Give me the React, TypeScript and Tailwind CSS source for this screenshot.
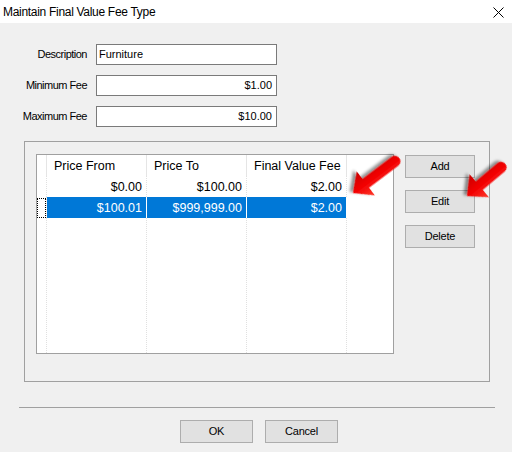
import React from "react";

const font = "font-['Liberation_Sans',Arial,sans-serif]";

const columns = [
  { key: "from", label: "Price From" },
  { key: "to", label: "Price To" },
  { key: "fee", label: "Final Value Fee" },
] as const;

type Row = { from: string; to: string; fee: string; selected?: boolean };

const rows: Row[] = [
  { from: "$0.00", to: "$100.00", fee: "$2.00" },
  { from: "$100.01", to: "$999,999.00", fee: "$2.00", selected: true },
];

function Field({ label, value, right }: { label: string; value: string; right?: boolean }) {
  return (
    <div className="flex items-center">
      <div className="w-[88px] pr-[1px] text-right text-[11px] tracking-[-0.5px] text-black">{label}</div>
      <div
        className={`ml-[8px] flex h-[21px] w-[181px] items-center border border-[#7a7a7a] bg-white text-[11px] text-black ${
          right ? "justify-end pr-[4px]" : "pl-[2px]"
        }`}
      >
        {value}
      </div>
    </div>
  );
}

function WinButton({ children, className = "" }: { children: React.ReactNode; className?: string }) {
  return (
    <button
      className={`flex h-[23px] items-center justify-center border border-[#adadad] bg-[#e1e1e1] text-[11px] tracking-[-0.2px] text-black ${className}`}
    >
      {children}
    </button>
  );
}

function FeeGrid() {
  return (
    <div className="flex h-[200px] w-[358px] overflow-hidden border border-[#a0a0a0] bg-white text-[12.5px] text-black">
      {/* row header strip */}
      <div className="flex w-[10px] flex-col">
        <div className="h-[21px] border-r border-[#e5e5e5]" />
        {rows.map((r, i) => (
          <div key={i} className="flex h-[21px] items-center border-r border-dotted border-[#e0e0e0] py-[1px]">
            {r.selected && <div className="h-[20px] w-[9px] border border-dotted border-black" />}
          </div>
        ))}
        <div className="flex-1 border-r border-dotted border-[#e0e0e0]" />
      </div>

      {columns.map((c) => (
        <div key={c.key} className="flex w-[100px] flex-col">
          <div className="flex h-[21px] items-center border-r border-[#e5e5e5] pl-[7px] pt-[2px]">{c.label}</div>
          {rows.map((r, i) => (
            <div
              key={i}
              className={`flex h-[21px] items-center justify-end pr-[4px] pt-[2px] ${
                r.selected
                  ? "border-r border-white bg-[#0078d7] text-white"
                  : "border-r border-dotted border-[#e0e0e0]"
              }`}
            >
              {r[c.key]}
            </div>
          ))}
          <div className="flex-1 border-r border-dotted border-[#e0e0e0]" />
        </div>
      ))}

      <div className="flex-1" />
    </div>
  );
}

// red callout arrow, tip at (x, y), pointing along `angle` degrees
function Arrow({ x, y, angle, length }: { x: number; y: number; angle: number; length: number }) {
  const t = length - 5.5;
  const d = `M0,0 L-16,-15 L-16,-5.5 L-${t},-5.5 A5.5,5.5 0 0 0 -${t},5.5 L-16,5.5 L-16,15 Z`;
  return (
    <g transform={`translate(${x} ${y}) rotate(${angle})`}>
      <path d={d} fill="url(#arrowRed)" filter="url(#arrowShadow)" />
    </g>
  );
}

export default function App() {
  return (
    <div className={`relative flex h-[452px] w-[512px] flex-col overflow-hidden bg-[#f0f0f0] ${font}`}>
      {/* title bar */}
      <div className="flex h-[23px] items-center justify-between bg-white pl-[3px] pr-[8px]">
        <span className="text-[12px] tracking-[-0.3px] text-black">Maintain Final Value Fee Type</span>
        <svg width="11" height="11" viewBox="0 0 11 11" className="mt-[1px]">
          <path d="M0.5,0.5 L10.5,10.5 M10.5,0.5 L0.5,10.5" stroke="#000" strokeWidth="1" />
        </svg>
      </div>

      <div className="mt-[21px] flex flex-col gap-[10px]">
        <Field label="Description" value="Furniture" />
        <Field label="Minimum Fee" value="$1.00" right />
        <Field label="Maximum Fee" value="$10.00" right />
      </div>

      {/* fee bands group */}
      <div className="ml-[24px] mt-[14px] flex h-[241px] w-[466px] border border-[#a0a0a0] pl-[11px] pt-[12px]">
        <FeeGrid />
        <div className="ml-[11px] flex flex-col gap-[12px] pt-[1px]">
          <WinButton className="w-[70px]">Add</WinButton>
          <WinButton className="w-[70px]">Edit</WinButton>
          <WinButton className="w-[70px]">Delete</WinButton>
        </div>
      </div>

      <div className="ml-[19px] mt-[25px] h-px w-[476px] bg-[#a0a0a0]" />

      <div className="mt-[12px] flex gap-[12px] pl-[180px]">
        <WinButton className="w-[73px]">OK</WinButton>
        <WinButton className="w-[73px]">Cancel</WinButton>
      </div>

      <svg className="pointer-events-none absolute left-0 top-0" width="512" height="452">
        <defs>
          <linearGradient id="arrowRed" x1="0" y1="0" x2="0" y2="1">
            <stop offset="0" stopColor="#ff3a2a" />
            <stop offset="0.5" stopColor="#f20000" />
            <stop offset="1" stopColor="#c80000" />
          </linearGradient>
          <filter id="arrowShadow" x="-30%" y="-30%" width="160%" height="160%">
            <feDropShadow dx="2" dy="3" stdDeviation="1.5" floodColor="#000" floodOpacity="0.45" />
          </filter>
        </defs>
        <Arrow x={353} y={193} angle={143} length={58} />
        <Arrow x={467} y={196} angle={140} length={50} />
      </svg>
    </div>
  );
}
